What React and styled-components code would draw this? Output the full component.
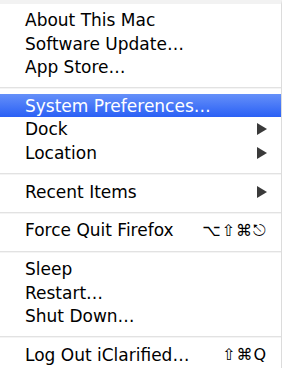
import React from "react";
import styled, { createGlobalStyle } from "styled-components";

const GlobalStyle = createGlobalStyle`
  body {
    margin: 0;
    background: #ffffff;
  }
`;

const items = [
  { label: "About This Mac" },
  { label: "Software Update…" },
  { label: "App Store…" },
  { sep: true },
  { label: "System Preferences…", active: true },
  { label: "Dock", sub: true },
  { label: "Location", sub: true },
  { sep: true },
  { label: "Recent Items", sub: true },
  { sep: true },
  { label: "Force Quit Firefox", keys: "⌥⇧⌘⎋" },
  { sep: true },
  { label: "Sleep" },
  { label: "Restart…" },
  { label: "Shut Down…" },
  { sep: true },
  { label: "Log Out iClarified…", keys: "⇧⌘Q" },
];

export default function App() {
  return (
    <>
      <GlobalStyle />
      <Menu>
        {items.map((item, i) =>
          item.sep ? (
            <Separator key={i} />
          ) : (
            <Row key={i} $active={item.active}>
              <span>{item.label}</span>
              {item.keys && <Keys>{item.keys}</Keys>}
              {item.sub && (
                <Arrow viewBox="0 0 10 12">
                  <polygon points="0,0 10,6 0,12" />
                </Arrow>
              )}
            </Row>
          )
        )}
      </Menu>
    </>
  );
}

const Menu = styled.div`
  width: 281px;
  height: 364px;
  border-top: 4px solid #f2f2f2;
  border-right: 1px solid #dcdcdc;
  padding-top: 4px;
  box-sizing: content-box;
  display: flex;
  flex-direction: column;
  font-family: "DejaVu Sans", "Liberation Sans", sans-serif;
  font-size: 17px;
  color: #000000;
  background: #ffffff;
`;

const Row = styled.div`
  height: 23.4px;
  flex-shrink: 0;
  display: flex;
  align-items: center;
  justify-content: space-between;
  padding: 1px 14px 0 25px;
  box-sizing: border-box;
  white-space: nowrap;
  color: ${(p) => (p.$active ? "#ffffff" : "#000000")};
  background: ${(p) =>
    p.$active ? "linear-gradient(#6590f9, #2a60f5)" : "transparent"};
`;

const Keys = styled.span`
  font-size: 16px;
  letter-spacing: 1px;
`;

const Arrow = styled.svg`
  width: 10px;
  height: 12px;
  fill: #3a3a3a;
`;

const Separator = styled.div`
  height: 15.5px;
  flex-shrink: 0;
  box-sizing: border-box;
  padding-top: 9px;
  &::after {
    content: "";
    display: block;
    height: 2px;
    background: linear-gradient(#e2e2e2 50%, #f4f4f4 50%);
  }
`;
